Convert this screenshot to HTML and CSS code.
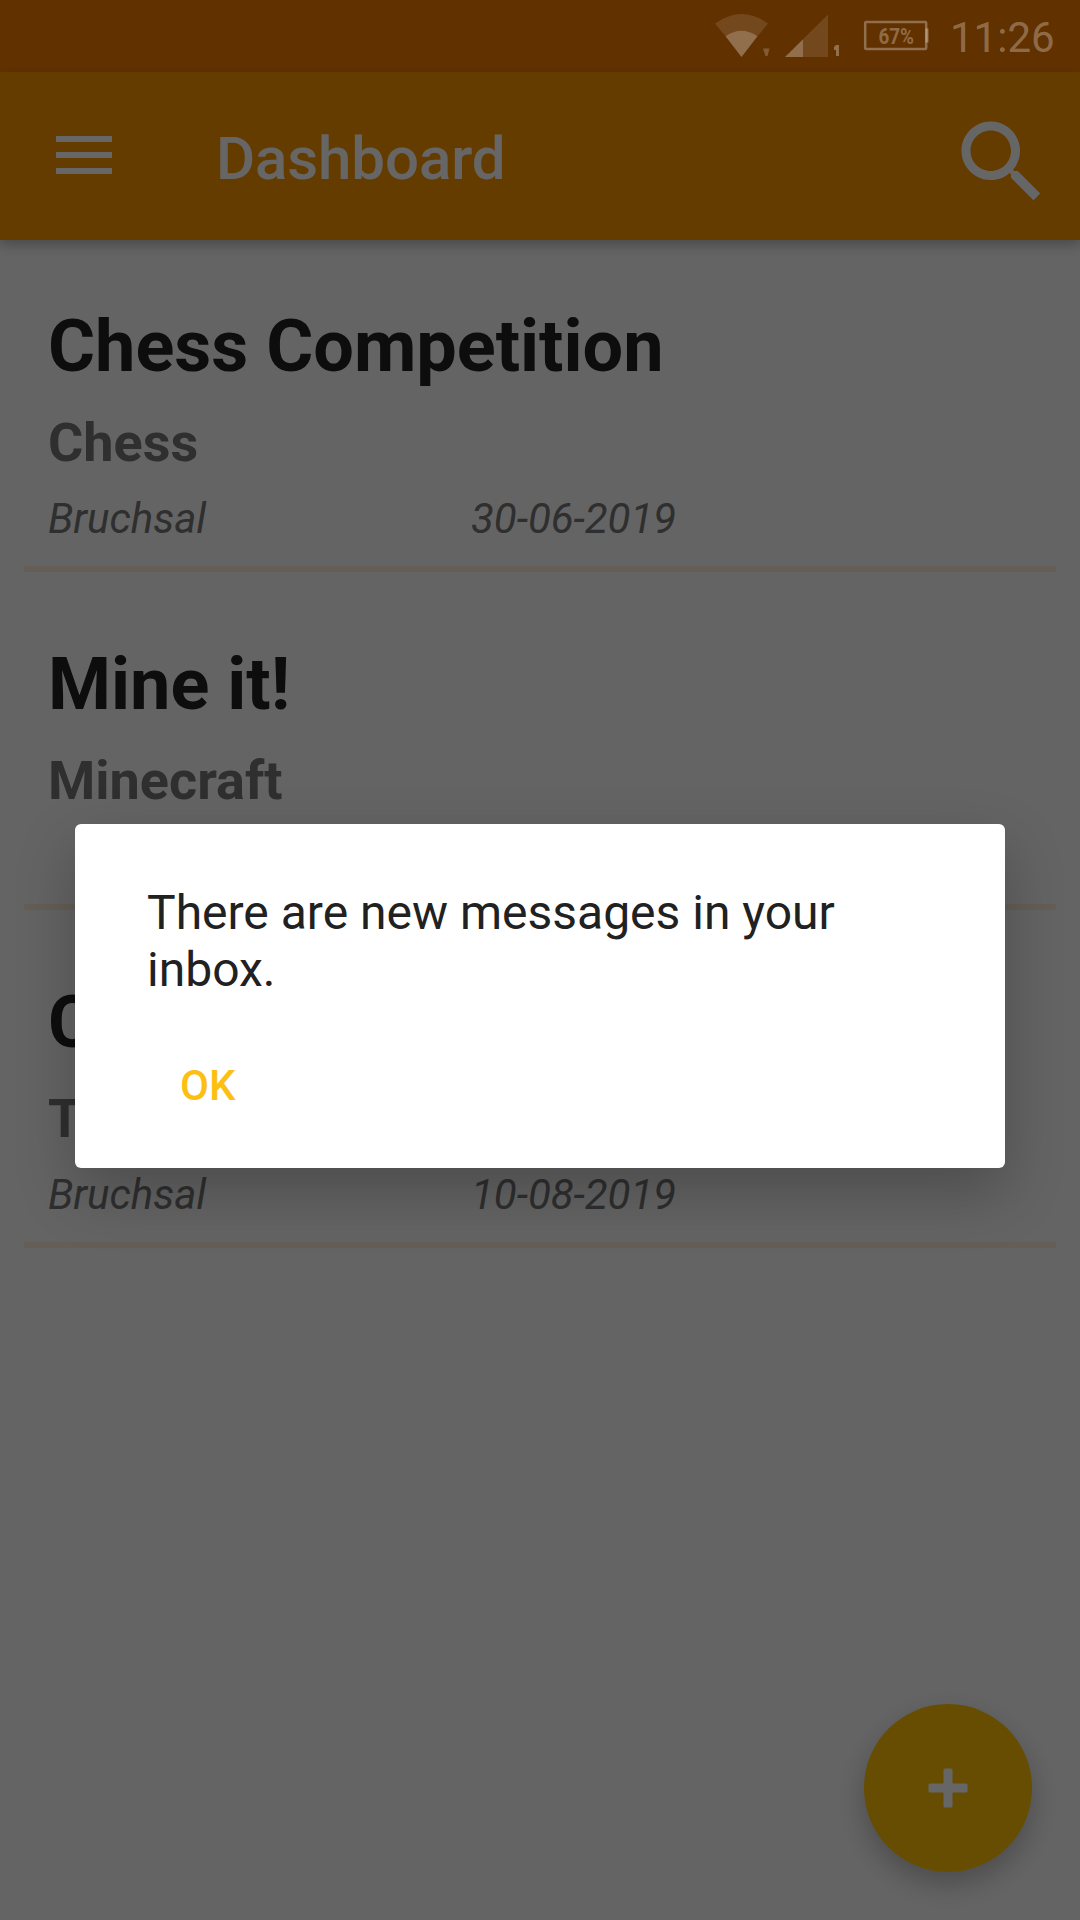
FILE: index.html
```html
<!DOCTYPE html>
<html lang="en">
<head>
<meta charset="utf-8">
<title>Dashboard</title>
<link rel="stylesheet" href="styles.css">
</head>
<body>
<div class="screen">
  <div class="status-bg"></div>
  <header class="app-bar">
    <svg class="menu-icon" width="56" height="38" viewBox="0 0 56 38"><path d="M0 0h56v6H0zM0 16h56v6H0zM0 32h56v6H0z"/></svg>
    <h1 class="app-title">Dashboard</h1>
    <svg class="search-icon" width="108" height="108" viewBox="0 0 24 24"><path d="M15.5 14h-.79l-.28-.27C15.41 12.59 16 11.11 16 9.5 16 5.91 13.09 3 9.5 3S3 5.91 3 9.5 5.91 16 9.5 16c1.61 0 3.09-.59 4.23-1.57l.27.28v.79l5 4.99L20.49 19l-4.99-5zm-6 0C7.01 14 5 11.99 5 9.5S7.01 5 9.5 5 14 7.01 14 9.5 11.99 14 9.5 14z"/></svg>
  </header>
  <main class="events">
    <article class="event">
      <h2 class="event-title">Chess Competition</h2>
      <h3 class="event-game">Chess</h3>
      <div class="event-meta"><span>Bruchsal</span><span>30-06-2019</span></div>
    </article>
    <article class="event">
      <h2 class="event-title">Mine it!</h2>
      <h3 class="event-game">Minecraft</h3>
      <div class="event-meta"></div>
    </article>
    <article class="event">
      <h2 class="event-title">C</h2>
      <h3 class="event-game">T</h3>
      <div class="event-meta"><span>Bruchsal</span><span>10-08-2019</span></div>
    </article>
  </main>
  <button class="fab" aria-label="Add">
    <svg width="40" height="40" viewBox="0 0 40 40"><rect x="15.500" y=".5" width="9" height="39" rx="1.5"/><rect x=".5" y="15.500" width="39" height="9" rx="1.5"/></svg>
  </button>

  <div class="scrim">
    <div class="status-bar">
      <svg class="wifi" width="56" height="44" viewBox="0 0 56 44"><path opacity=".38" d="M0 9.5Q26.500-9.500 53 9.500L42.500 22.300Q26.500 11.300 10.500 22.300Z"/><path d="M10.500 22.300Q26.500 11.300 42.500 22.300L26.500 43Z"/><path opacity=".7" d="M48 34.500h6.500L52.500 42h-2z"/></svg>
      <svg class="signal" width="56" height="44" viewBox="0 0 56 44"><path opacity=".38" d="M18 25.300L43 .500V43H18z"/><path d="M0 43L18 25.300V43z"/><path d="M51 31h3v11h-3v-6h-2v-3z"/></svg>
      <svg class="battery" width="66" height="32" viewBox="0 0 66 32"><rect class="outline" x="2.200" y="3" width="61" height="27" rx="1"/><path d="M62.500 9.500h3v14h-3z"/><text x="15.500" y="25" textLength="35.500" lengthAdjust="spacingAndGlyphs">67%</text></svg>
      <span class="clock">11:26</span>
    </div>
    <section class="dialog" role="dialog">
      <p class="dialog-text">There are new messages in your inbox.</p>
      <button class="dialog-action">OK</button>
    </section>
  </div>
</div>
</body>
</html>
```

FILE: styles.css
```css
* { box-sizing: border-box; }

body {
  margin: 0;
  font-family: Roboto, sans-serif;
}

h1, h2, h3, p { margin: 0; }

button {
  border: 0;
  padding: 0;
  font-family: inherit;
}

.screen {
  position: relative;
  width: 1080px;
  height: 1920px;
  overflow: hidden;
  background: #fafafa;
}

.status-bg {
  height: 72px;
  background: #f57c00;
}

.app-bar {
  display: flex;
  align-items: center;
  height: 168px;
  padding: 0 24px 0 56px;
  background: #fc9700;
  fill: #fff;
  box-shadow: 0 5px 12px rgba(0, 0, 0, .27);
}

.menu-icon { margin-bottom: 2px; }

.app-title {
  flex: 1;
  margin-left: 104px;
  padding-top: 5px;
  color: #fff;
  font-size: 60px;
  font-weight: 500;
  letter-spacing: -.1px;
  line-height: 72px;
}

.search-icon { margin: 11px 0 0; }

.events {
  display: flex;
  flex-direction: column;
  gap: 6px;
  padding: 0 24px;
}

.event {
  height: 332px;
  padding: 65px 24px 0;
  border-bottom: 6px solid #faead8;
}

.event-title {
  color: #212121;
  font-size: 72px;
  font-weight: 700;
  line-height: 84px;
}

.event-game {
  margin: 22px 0 19px;
  color: #757575;
  font-size: 54px;
  font-weight: 700;
  line-height: 64px;
}

.event-meta {
  display: grid;
  grid-template-columns: 423px 1fr;
  color: #757575;
  font-size: 42px;
  font-style: italic;
  letter-spacing: -.05px;
  line-height: 50px;
}

.fab {
  position: absolute;
  right: 48px;
  bottom: 48px;
  display: flex;
  align-items: center;
  justify-content: center;
  width: 168px;
  height: 168px;
  border-radius: 50%;
  background: #ffc107;
  fill: #fff;
  box-shadow: 0 12px 28px rgba(0, 0, 0, .24);
}

.scrim {
  position: absolute;
  inset: 0;
  background: rgba(0, 0, 0, .6);
}

.status-bar {
  display: flex;
  height: 72px;
  padding: 14px 24px 0 715px;
  color: rgba(255, 255, 255, .3);
  fill: rgba(255, 255, 255, .3);
}

.signal { margin-left: 14px; }

.battery { margin: 5px 0 0 22px; }

.battery .outline {
  fill: none;
  stroke: rgba(255, 255, 255, .3);
  stroke-width: 2.500;
}

.battery text {
  font-size: 22px;
  font-weight: 700;
}

.clock {
  margin: -1px 0 0 21px;
  font-size: 42px;
  line-height: 50px;
}

.dialog {
  height: 344px;
  margin: 752px 75px 0;
  padding: 60px 72px 0;
  border-radius: 6px;
  background: #fff;
  box-shadow: 0 24px 60px rgba(0, 0, 0, .24);
}

.dialog-text {
  color: #212121;
  font-size: 48px;
  line-height: 57px;
}

.dialog-action {
  display: block;
  margin: 63px 0 0 33px;
  background: none;
  color: #fcc014;
  font-size: 42px;
  font-weight: 500;
  line-height: 50px;
}
```
